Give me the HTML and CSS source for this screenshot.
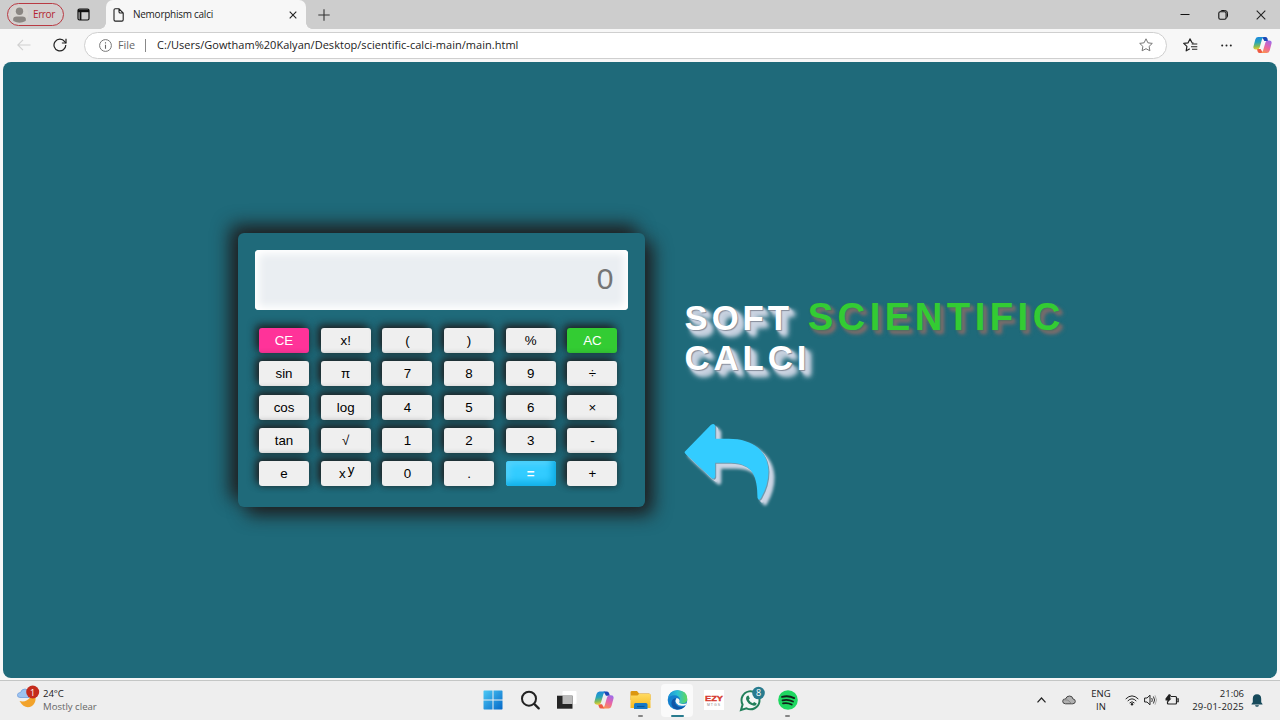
FILE: index.html
```html
<!DOCTYPE html>
<html lang="en">
<head>
<meta charset="utf-8">
<title>Nemorphism calci</title>
<link rel="stylesheet" href="styles.css">
</head>
<body>
<svg width="0" height="0" class="defs">
  <defs>
    <linearGradient id="cpA" x1=".2" y1="0" x2="0.3" y2="1"><stop offset="0" stop-color="#1b86e0"/><stop offset=".45" stop-color="#28a6b8"/><stop offset=".75" stop-color="#83bb58"/><stop offset="1" stop-color="#efcf32"/></linearGradient>
    <linearGradient id="cpB" x1=".7" y1="0" x2=".3" y2="1"><stop offset="0" stop-color="#a06be8"/><stop offset=".5" stop-color="#e864a8"/><stop offset="1" stop-color="#fb9050"/></linearGradient>
    <linearGradient id="win" x1="0" y1="0" x2="1" y2="1"><stop offset="0" stop-color="#4cc9f5"/><stop offset="1" stop-color="#0568c8"/></linearGradient>
    <linearGradient id="edgeG" x1="0" y1="0" x2="1" y2="0"><stop offset="0" stop-color="#1b8fd8"/><stop offset=".5" stop-color="#2bc0d4"/><stop offset="1" stop-color="#62d957"/></linearGradient>
    <linearGradient id="folder" x1="0" y1="0" x2="0" y2="1"><stop offset="0" stop-color="#ffda61"/><stop offset="1" stop-color="#f6b91f"/></linearGradient>
    <symbol id="copilot" viewBox="0 0 20 18">
      <path d="M9.500 .5h3.500q1.500 0 2 1.500l.9 2.800H12z" fill="#1b48b8"/>
      <path d="M10.500 17.500H7q-1.500 0-2-1.500l-.9-2.800H8z" fill="#ee5a43"/>
      <path d="M5.500.5h6Q10 1.200 9.400 3.200L7 11.500q-.6 2.200-2.800 2.200H3Q-.2 13.700.5 10.500L2.500 3Q3.300.5 5.500.5z" fill="url(#cpA)"/>
      <path d="M14.500 17.500h-6q1.500-.7 2.100-2.700L13 6.500q.6-2.200 2.800-2.200H17q3.200 0 2.500 3.200L17.500 15q-.8 2.500-3 2.500z" fill="url(#cpB)"/>
    </symbol>
  </defs>
</svg>
<div class="screen">
  <header class="tabbar">
    <div class="profile">
      <svg width="19" height="19" viewBox="0 0 17 17"><circle cx="8.500" cy="8.500" r="8" fill="#d6d3cf"/><circle cx="8.500" cy="5.600" r="3.300" fill="#8a8682"/><path d="M3 14.300q-1-4 3-4h5q4 0 3 4-5.500 3-11 0z" fill="#8a8682"/></svg>
      <span>Error</span>
    </div>
    <svg class="workspaces" width="13" height="13" viewBox="0 0 13 13"><rect x="1" y="1" width="11" height="11" rx="1.500" fill="none" stroke="#111" stroke-width="1.200"/><path d="M1 1.500h11v2.700H1z" fill="#111"/><path d="M3.500 3v9" stroke="#111" stroke-width="1.800"/></svg>
    <div class="tab">
      <svg width="11" height="14" viewBox="0 0 11 14"><path d="M1 2q0-1.300 1.300-1.300H6L10.200 5v6.800q0 1.300-1.300 1.300H2.300Q1 13.100 1 11.800zM6 .8V3.700Q6 5 7.300 5h2.800" fill="none" stroke="#222" stroke-width="1.100"/></svg>
      <span class="tab-title">Nemorphism calci</span>
      <svg class="tab-close" width="8" height="8" viewBox="0 0 8 8"><path d="M.7.7l6.600 6.600M7.300.7L.7 7.300" stroke="#222" stroke-width="1.100"/></svg>
    </div>
    <svg class="newtab" width="12" height="12" viewBox="0 0 12 12"><path d="M6 .3v11.400M.3 6h11.400" stroke="#333" stroke-width="1.100"/></svg>
    <div class="winctl">
      <svg width="10" height="10" viewBox="0 0 10 10"><path d="M.5 4.500h9" stroke="#111"/></svg>
      <svg width="10" height="10" viewBox="0 0 10 10"><rect x=".8" y="1.700" width="7.300" height="7.500" rx="1.500" fill="none" stroke="#111" stroke-width="1.100"/><path d="M2.500 1.200q.5-.7 1.300-.7h3q2.700 0 2.700 2.700v3.300q0 .8-.8 1.200" fill="none" stroke="#111"/></svg>
      <svg width="10" height="10" viewBox="0 0 10 10"><path d="M.7.700l8.600 8.600M9.300.7L.7 9.300" stroke="#222" stroke-width="1.100"/></svg>
    </div>
  </header>
  <nav class="toolbar">
    <svg class="back" width="14" height="12" viewBox="0 0 14 12"><path d="M13.500 6H1M6 .8L.8 6 6 11.200" fill="none" stroke="#d0d0d0" stroke-width="1.100"/></svg>
    <svg class="reload" width="14" height="14" viewBox="0 0 14 14"><path d="M12.800 7A5.900 5.900 0 1 1 11.700 3.600L13 5" fill="none" stroke="#222" stroke-width="1.200"/><path d="M13 .8V5H8.900" fill="none" stroke="#222" stroke-width="1.200"/></svg>
    <div class="address">
      <svg width="13" height="13" viewBox="0 0 13 13"><circle cx="6.500" cy="6.500" r="5.900" fill="none" stroke="#777"/><path d="M6.500 5.700v4M6.500 3.300v1.300" stroke="#666" stroke-width="1.100"/></svg>
      <span class="scheme">File</span>
      <i class="sep"></i>
      <span class="url">C:/Users/Gowtham%20Kalyan/Desktop/scientific-calci-main/main.html</span>
      <svg class="star" width="14" height="14" viewBox="0 0 14 14"><path d="M7 .8l1.900 4 4.400.6-3.200 3 .8 4.400L7 10.700l-3.900 2.100.8-4.400-3.200-3 4.400-.6z" fill="none" stroke="#777" stroke-linejoin="round"/></svg>
    </div>
    <svg class="favs" width="15" height="14" viewBox="0 0 15 14"><path d="M9 4.700L7 .9 5.100 4.800l-4.400.6 3.200 3-.7 4.400L6.500 11M9 4.800l1.500.3M3.300 12.700l3.500-1.900" fill="none" stroke="#222" stroke-width="1.200" stroke-linejoin="round"/><path d="M8.700 6h5.600M8 8.700h6.300M9 11.300h5.300" stroke="#222" stroke-width="1.100"/></svg>
    <svg class="more" width="11" height="3" viewBox="0 0 11 3"><g fill="#222"><circle cx="1.200" cy="1.500" r="1"/><circle cx="5.500" cy="1.500" r="1"/><circle cx="9.800" cy="1.500" r="1"/></g></svg>
    <svg class="side-copilot" width="19" height="18"><use href="#copilot"/></svg>
  </nav>

  <main class="page">
    <section class="calc">
      <div class="display">0</div>
      <div class="keys">
        <button class="key pink">CE</button><button class="key">x!</button><button class="key">(</button><button class="key">)</button><button class="key">%</button><button class="key green">AC</button>
        <button class="key">sin</button><button class="key">π</button><button class="key">7</button><button class="key">8</button><button class="key">9</button><button class="key">÷</button>
        <button class="key">cos</button><button class="key">log</button><button class="key">4</button><button class="key">5</button><button class="key">6</button><button class="key">×</button>
        <button class="key">tan</button><button class="key">√</button><button class="key">1</button><button class="key">2</button><button class="key">3</button><button class="key">-</button>
        <button class="key">e</button><button class="key">x<span class="pow">y</span></button><button class="key">0</button><button class="key">.</button><button class="key blue">=</button><button class="key">+</button>
      </div>
    </section>
    <section class="intro">
      <h1>SOFT <span>SCIENTIFIC</span><br>CALCI</h1>
      <svg class="arrow" width="88" height="78" viewBox="0 0 88 78"><path d="M1.200 28.200L26.800 1.900Q30.500-.3 31.200 3v12.700H44C70 15.500 84 29 84.500 48q0 14-7.500 27-2.300 3.500-3.500-.2C73.500 54 69 40 46 39.800H31.200V53.500q-.6 3.500-4 1.300L1.200 30.500q-1.200-1.200 0-2.300z" fill="#33ccff"/></svg>
    </section>
  </main>

  <footer class="taskbar">
    <div class="weather">
      <svg width="25" height="25" viewBox="0 0 25 25"><path d="M3 13.500Q0 13.500 .5 10.500 1 8.500 3.500 8.500q1-3.500 4.500-3.500T12 8.500v5z" fill="#9dc3ef" stroke="#719fdd" stroke-width=".8"/><path d="M2.500 17Q9 19 14 12.500l4-1Q20 18 15 22q-7 4-12.500-5z" fill="#f2a32b"/><circle cx="15.700" cy="8" r="6.500" fill="#c42b1c"/><text x="15.700" y="11.500" text-anchor="middle" class="badge-one">1</text></svg>
      <div class="weather-text"><span>24°C</span><span class="muted">Mostly clear</span></div>
    </div>
    <div class="apps">
      <div class="app"><svg width="20" height="20" viewBox="0 0 20 20"><path d="M1 .5h8.500v9H.5V1zM10.500.5H19l.5.500v8.500h-9zM.5 10.500h9v9H1l-.5-.5zM10.500 10.500h9V19l-.5.5h-8.500z" fill="url(#win)"/></svg></div>
      <div class="app"><svg width="20" height="20" viewBox="0 0 20 20"><circle cx="9" cy="8.700" r="7" fill="none" stroke="#222" stroke-width="2"/><path d="M14.200 13.900l4.500 4.500" stroke="#222" stroke-width="2.200" stroke-linecap="round"/></svg></div>
      <div class="app"><svg width="21" height="20" viewBox="0 0 21 20"><rect x="6.500" y="1" width="14" height="13" rx="1" fill="#fff"/><path d="M1 5.700h15.500v13H1z" fill="#252525"/><path d="M6.500 5.700h10V14h-10z" fill="#bbb"/></svg></div>
      <div class="app"><svg width="20" height="18"><use href="#copilot"/></svg></div>
      <div class="app"><svg width="21" height="20" viewBox="0 0 21 20"><path d="M.5 2Q.5 1 2 1h5l2 2.500h10q1.500 0 1.500 1.500v5H.5z" fill="#dc9710"/><path d="M.5 5.500h7L9 4h10.500q1 0 1 1V18H.5z" fill="url(#folder)"/><path d="M4 19v-4.500q0-1.500 1.500-1.500h10.500q1.500 0 1.500 1.500V19z" fill="#1678c7"/><path d="M7 16.500h7.500" stroke="#07559b" stroke-width="1.200"/></svg><i class="dot"></i></div>
      <div class="app active"><svg width="21" height="20" viewBox="0 0 21 20"><circle cx="10.500" cy="10" r="9.800" fill="#147fce"/><path d="M.8 9Q2 .2 10.500.2q9.800.3 9.800 8.600 0 4.500-5 5-3.300 0-3.300-1.500 1.200-1 1-3Q12.500 5.500 7.500 5.200 2.800 5.200.8 9z" fill="url(#edgeG)"/><path d="M9 8q-3 5 1.500 8.300 4 2.200 8.300-.8-4 4.700-9.500 4Q3.800 17.500 4.500 12 5.300 8.500 9 8z" fill="#1155a6"/><path d="M9.500 8q-1.800 2.500-.2 5.300 3 4 9.700 1.700l1-1.700q-3 1-6 .4-2.700-.7-1.500-2 .7-3-3-3.700z" fill="#f3f6f8"/></svg><i class="dot wide"></i></div>
      <div class="app"><svg width="20" height="20" viewBox="0 0 20 20"><path d="M0 0h20v20H0z" fill="#fff"/><text x="10" y="11.300" text-anchor="middle" class="ezy" textLength="18" lengthAdjust="spacingAndGlyphs">EZY</text><text x="10" y="16" text-anchor="middle" class="ezy-sub">MTGS</text></svg></div>
      <div class="app"><svg class="whatsapp" width="24" height="26" viewBox="0 0 24 26"><path d="M2 23l1.600-5.500A9 9 0 1 1 7.500 21.300z" fill="#f4f7f5" stroke="#22805a" stroke-width="2"/><path d="M8 9l1.500-.5 1.300 3-1 1.300q1.500 2.800 4 3.500l1.300-1.300 2.700 1.500q-.5 2.500-3 2.200Q8.500 17.500 7 12q0-2 1-3z" fill="#22805a"/><circle cx="19.500" cy="6" r="6.300" fill="#287b8e"/><text x="19.500" y="9.300" text-anchor="middle" class="badge-eight">8</text></svg></div>
      <div class="app"><svg width="20" height="20" viewBox="0 0 20 20"><circle cx="10" cy="10" r="9.800" fill="#1ed760"/><path d="M4 6.900q6.500-1.800 12.200 1.200M4.500 10.300q5.500-1.400 10.500 1.200M5 13.400q4.500-1.100 8.700 1.100" fill="none" stroke="#11201a" stroke-width="1.800" stroke-linecap="round"/></svg><i class="dot"></i></div>
    </div>
    <div class="tray">
      <svg class="chev" width="9" height="6" viewBox="0 0 9 6"><path d="M.5 5.300l4-4.300 4 4.300" fill="none" stroke="#222" stroke-width="1.200"/></svg>
      <svg class="cloud" width="14" height="10" viewBox="0 0 14 10"><path d="M3.500 8.800Q.7 8.700.7 6.200T3.500 4Q4.500 1 7.500 1T11 4q2.300.2 2.300 2.400t-2.500 2.400z" fill="#b0b0b0" stroke="#444"/><path d="M2 4.700q4-1 7.500 3.800" fill="none" stroke="#888"/></svg>
      <div class="lang"><span>ENG</span><span>IN</span></div>
      <svg class="wifi" width="14" height="11" viewBox="0 0 14 11"><g fill="none" stroke="#222"><path d="M.7 4Q7-2.200 13.300 4M2.700 6Q7 1.700 11.300 6M4.600 8Q7 5.500 9.400 8"/></g><circle cx="7" cy="9.300" r="1.200" fill="#222"/></svg>
      <svg class="sound" width="13" height="12" viewBox="0 0 13 12"><path d="M.6 4H3L6 1.200v9.600L3 8H.6z" fill="none" stroke="#222"/><path d="M7.700 4q1.300 2 0 4M9.400 2.500q2.400 3.500 0 7" fill="none" stroke="#333"/><path d="M11 1.300q3 4.700 0 9.400" fill="none" stroke="#aaa"/></svg>
      <svg class="battery" width="14" height="12" viewBox="0 0 14 12"><path d="M6 2.500h4.500q1 0 1 1V9q0 1-1 1h-7q-1 0-1-1V7.500M12.300 4.800h.9v2.800h-.9" fill="none" stroke="#222" stroke-width="1.200"/><path d="M4 0L.5 4.500v2h2l-.6 2.800L6.500 4.500H5L6 1z" fill="#222"/></svg>
      <div class="clock"><span class="time">21:06</span><span class="date">29-01-2025</span></div>
      <svg class="bell" width="12" height="13" viewBox="0 0 12 13"><path d="M6 .3q4.200.2 4.200 4.500v3.400l1.300 1.700v.6H.5v-.6l1.300-1.700V4.800Q1.800.5 6 .3zM4 11.200h4q-.4 1.500-2 1.500t-2-1.500z" fill="#174a5b"/></svg>
    </div>
  </footer>
</div>
</body>
</html>
```
FILE: styles.css
```css
* { box-sizing: border-box; }
body { margin: 0; overflow: hidden; font-family: "Open Sans", "Noto Sans", sans-serif; }
svg { display: block; flex: none; }
.defs { position: absolute; }
.screen { width: 1280px; height: 720px; display: flex; flex-direction: column; background: #f7f7f7; }

.tabbar { height: 29px; flex: none; background: #cdcdcd; display: flex; align-items: center; padding-left: 7px; }
.profile { width: 57px; height: 23px; border: 1px solid #b93a43; border-radius: 12px; display: flex; align-items: center; gap: 4px; padding: 0 0 1px 2px; color: #b3242f; font-size: 10px; letter-spacing: -0.4px; background: #d2cfcf; }
.workspaces { margin-left: 13px; }
.tab { position: relative; width: 200px; height: 29px; margin-left: 16px; background: #f7f7f7; border-radius: 7px 7px 0 0; display: flex; align-items: center; padding: 0 9px 0 7px; }
.tab::before, .tab::after { content: ""; position: absolute; bottom: 0; width: 6px; height: 6px; }
.tab::before { left: -6px; background: radial-gradient(circle at 0 0, transparent 5.5px, #f7f7f7 6px); }
.tab::after { right: -6px; background: radial-gradient(circle at 100% 0, transparent 5.5px, #f7f7f7 6px); }
.tab-title { font-size: 10px; letter-spacing: -0.26px; margin-left: 9px; padding-bottom: 1px; color: #1c1c1c; white-space: nowrap; }
.tab-close { margin-left: auto; }
.newtab { margin-left: 12px; }
.winctl { margin-left: auto; display: flex; gap: 28px; padding-right: 14px; }

.toolbar { height: 33px; flex: none; display: flex; align-items: center; padding: 0 0 1px 17px; }
.reload { margin-left: 22px; }
.address { width: 1083px; height: 27px; margin-left: 17px; border: 1px solid #cfcfcf; border-radius: 14px; background: #fff; display: flex; align-items: center; padding: 0 13px 0 14px; font-size: 11px; color: #1c1c1c; }
.scheme { margin-left: 6px; padding-bottom: 1px; color: #666; font-size: 10.8px; width: 18px; }
.sep { width: 1px; height: 13px; background: #888; margin: 0 11px 0 9px; }
.url { white-space: nowrap; letter-spacing: 0.03px; padding-bottom: 1px; }
.star { margin-left: auto; }
.favs { margin-left: 16px; }
.more { margin-left: 23px; }
.side-copilot { margin-left: 20.500px; }

.page { height: 616px; flex: none; margin: 0 3px; padding: 171px 0 0 235px; background: #1f6a7a; border-radius: 8px; display: flex; align-items: flex-start; font-family: "Liberation Sans", Arial, sans-serif; }
.calc { width: 407px; height: 274px; border-radius: 6px; background: #1f6a7a; padding: 16.5px 17px; box-shadow: -8px -8px 18px #1f1f20, 8px 8px 18px #1f1f20; }
.display { height: 60px; border-radius: 4px; background: #eaeef2; box-shadow: inset 4px 4px 9px #fff, inset -4px -4px 9px #fff; color: #757575; font-size: 30px; line-height: 57px; text-align: right; padding-right: 14.500px; }
.keys { display: grid; grid-template-columns: repeat(6, 50px); grid-auto-rows: 25px; column-gap: 11.7px; row-gap: 8.350px; padding: 18.500px 0 0 4px; }
.key { border: 0; border-radius: 3px; padding: 0; background: #efefef; color: #000; font: 13.330px/25px "Liberation Sans", Arial, sans-serif; box-shadow: -3px -3px 8px #1f1f20, 1px 1px 6px rgba(31, 32, 34, 0.4); }
.pink { background: #ff3399; color: #fff; }
.green { background: #33cc33; color: #fff; }
.blue { background: #33ccff; color: #fff; font-weight: bold; box-shadow: inset -4px -4px 7px #0fade5, inset 3px 3px 6px #5bd5fc; }
.pow { position: relative; top: -4px; left: 2px; }

.intro { margin-left: 39.500px; padding-top: 64px; }
h1 { margin: 0; font-size: 34.700px; line-height: 40px; letter-spacing: 4px; color: #fff; white-space: nowrap; text-shadow: 1px 1px 1px #848b99, 2px 2px 2px #cdd5e3, 4px 4px 3px #cdd5e3, 6px 6px 4px #cdd5e3, 6px 6px 6px #cdd5e3; }
h1 span { font-size: 38.200px; letter-spacing: 4.500px; margin-left: 1px; color: #33cc33; text-shadow: 1px 1px 2px #4c7060, 3px 3px 3px #7b6c6c, 4px 4px 4px #7b6c6c; }
.arrow { margin: 44.500px 0 0 -0.500px; overflow: visible; filter: drop-shadow(1px 1px 0.5px #7199ad) drop-shadow(2px 2px 0.5px #ccd5e4) drop-shadow(3px 3px 1.500px #ccd5e4); }

.taskbar { height: 40px; margin-top: 2px; border-top: 1px solid #c4c6c5; background: #eee; display: grid; grid-template-columns: 470px 370px 1fr; color: #1c1c1c; }
.weather { display: flex; align-items: flex-start; padding: 3px 0 0 17px; gap: 1px; }
.weather-text { display: flex; flex-direction: column; font-size: 9.600px; line-height: 13px; padding-top: 3px; }
.weather-text span:first-child { letter-spacing: -0.1px; }
.muted { color: #666; }
.badge-one { font: 9px "Open Sans", sans-serif; fill: #fff; }
.badge-eight { font: 9px "Open Sans", sans-serif; fill: #fff; }
.ezy { font: bold 8px "Liberation Sans", sans-serif; fill: #d6382f; stroke: #d6382f; stroke-width: 0.4px; }
.ezy-sub { font: 3.500px "Liberation Sans", sans-serif; fill: #888; letter-spacing: 1px; }
.apps { display: flex; gap: 4.800px; padding: 3px 0 0 7.300px; }
.app { position: relative; width: 32px; height: 33px; display: flex; align-items: center; justify-content: center; border-radius: 4px; }
.app > svg { margin-top: -1px; }
.whatsapp { overflow: visible; }
.active { background: #fafafa; }
.dot { position: absolute; bottom: 0; left: 13.500px; width: 5px; height: 2px; border-radius: 1px; background: #858585; }
.wide { left: 9.500px; width: 13px; background: #287b8e; }
.tray { display: flex; align-items: center; justify-content: flex-end; padding: 0 17px 1px 0; font-size: 9.500px; line-height: 13px; }
.lang, .clock { display: flex; flex-direction: column; }
.lang { align-items: center; width: 20px; margin: 0 14px 0 15px; }
.clock { align-items: flex-end; width: 53px; margin: 0 7px 0 12px; white-space: nowrap; }
.date { letter-spacing: 0.22px; }
.cloud { margin-left: 16px; }
.sound { margin-left: 5px; }
.battery { margin-left: 8px; }
```
